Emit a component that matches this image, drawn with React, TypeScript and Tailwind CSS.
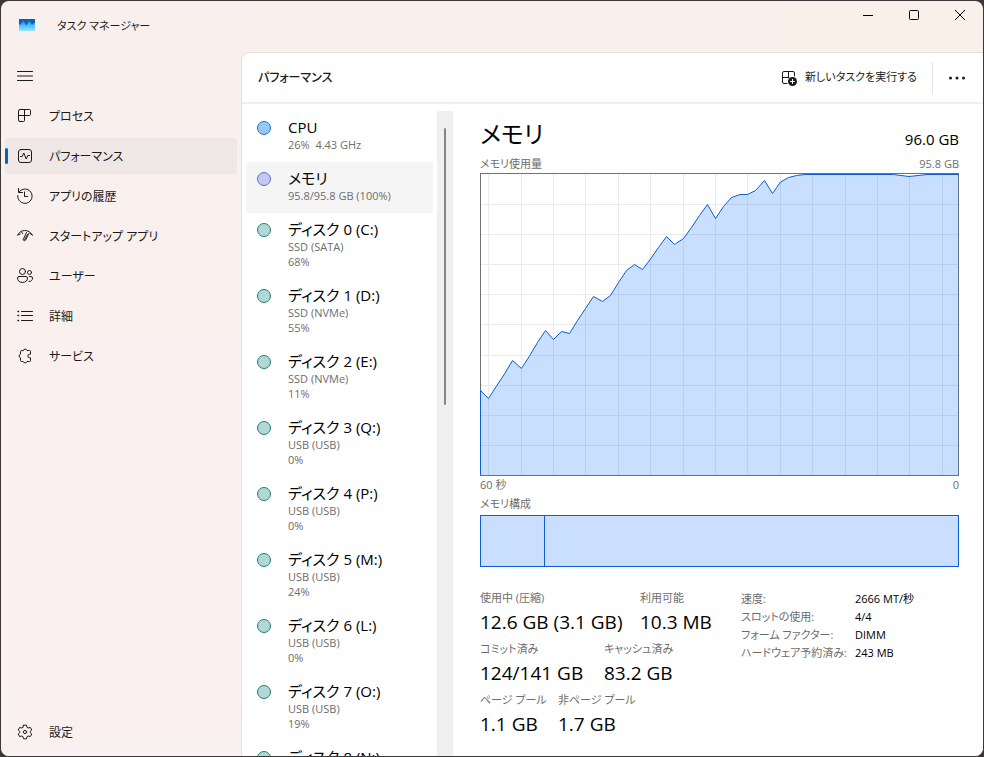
import clsx from "clsx";
import { ReactNode } from "react";

type Device = {
  name: string;
  lines: string[];
  kind: "cpu" | "memory" | "disk";
};

const devices: Device[] = [
  { name: "CPU", lines: ["26%  4.43 GHz"], kind: "cpu" },
  { name: "メモリ", lines: ["95.8/95.8 GB (100%)"], kind: "memory" },
  { name: "ディスク 0 (C:)", lines: ["SSD (SATA)", "68%"], kind: "disk" },
  { name: "ディスク 1 (D:)", lines: ["SSD (NVMe)", "55%"], kind: "disk" },
  { name: "ディスク 2 (E:)", lines: ["SSD (NVMe)", "11%"], kind: "disk" },
  { name: "ディスク 3 (Q:)", lines: ["USB (USB)", "0%"], kind: "disk" },
  { name: "ディスク 4 (P:)", lines: ["USB (USB)", "0%"], kind: "disk" },
  { name: "ディスク 5 (M:)", lines: ["USB (USB)", "24%"], kind: "disk" },
  { name: "ディスク 6 (L:)", lines: ["USB (USB)", "0%"], kind: "disk" },
  { name: "ディスク 7 (O:)", lines: ["USB (USB)", "19%"], kind: "disk" },
  { name: "ディスク 8 (N:)", lines: [], kind: "disk" },
];

const dotColors = {
  cpu: "border-[#1378d1] bg-[#98c8f0]",
  memory: "border-[#5b6ee1] bg-[#c3c9f3]",
  disk: "border-[#1f7f78] bg-[#b3d6d6]",
};

const specs = [
  ["速度:", "2666 MT/秒"],
  ["スロットの使用:", "4/4"],
  ["フォーム ファクター:", "DIMM"],
  ["ハードウェア予約済み:", "243 MB"],
];

const gridX = [
  8.5, 41.5, 73.5, 105.5, 138.5, 170.5, 203.5, 235.5, 267.5, 300.5, 332.5,
  365.5, 397.5, 429.5, 462.5,
];
const gridY = [31.5, 61.5, 91.5, 121.5, 151.5, 182.5, 212.5, 242.5, 272.5];

const usage =
  "0.5,217.5 8.5,225.5 16.5,213 24.5,201 32.5,187.5 41.5,195.5 49.5,183 57.5,169.5 65.5,157.5 73.5,166.5 81.5,158.5 89.5,160.5 97.5,147.5 105.5,135.5 113.5,123.5 122.5,128.5 130.5,122.5 138.5,109.5 146.5,97.5 154.5,91.5 162.5,96.5 170.5,86 178.5,74.5 186.5,63.5 194.5,71.5 203.5,65.5 211.5,54.5 219.5,42.5 227.5,31.5 235.5,45.5 243.5,33.5 251.5,24.5 260,21.5 267.5,21.5 275.5,17.5 284.5,7.5 292.5,20.5 300.5,9 308.5,4.5 316.5,2.5 325,1.5 413.5,1.5 429,3.5 447,1.5 478.5,1.5";

function Icon({ children }: { children: ReactNode }) {
  return (
    <svg
      className="size-4 shrink-0"
      viewBox="0 0 16 16"
      fill="none"
      stroke="currentColor"
      strokeLinecap="round"
      strokeLinejoin="round"
      aria-hidden="true"
    >
      {children}
    </svg>
  );
}

const MenuIcon = () => (
  <Icon>
    <path d="M.5 3.5h15M.5 8h15M.5 12.5h15" />
  </Icon>
);

const ProcessIcon = () => (
  <Icon>
    <path d="M3 1.5h9.500a1 1 0 0 1 1 1v4a1 1 0 0 1-1 1H1.500V3A1.500 1.500 0 0 1 3 1.500ZM1.500 7.500v4.500A1.500 1.500 0 0 0 3 13.500h3.500a1 1 0 0 0 1-1v-11" />
  </Icon>
);

const PerformanceIcon = () => (
  <Icon>
    <rect x="1.500" y="1.500" width="13" height="13" rx="2.500" />
    <path d="M3.500 8.500h1.700L6.800 5l2.400 6 1.600-3.500h1.700" />
  </Icon>
);

const HistoryIcon = () => (
  <Icon>
    <path d="M1.500.5v4h4" />
    <path d="M1.800 4.300A7.200 7.200 0 1 1 .7 7.500" />
    <path d="M7.500 4v4.500h3" />
  </Icon>
);

const StartupIcon = () => (
  <Icon>
    <path d="M.7 7C2.200 4.200 4.700 2.600 7.500 2.500c3.300-.1 6.200 1.600 7.800 4.500" />
    <path d="M.7 7 3.200 6M15.300 7 13 5.500M4.500 3.800l1 1.700M11.800 5.500l-3.300 6.700a1.200 1.200 0 0 1-2.200-.8L9.500 4.500" />
    <path d="M10.500 6.500 7.700 11.500" />
  </Icon>
);

const UsersIcon = () => (
  <Icon>
    <circle cx="5.500" cy="3.500" r="3" />
    <circle cx="12.500" cy="4.500" r="2" />
    <path d="M2 8.500h7a1.500 1.500 0 0 1 1.500 1.500c0 2.700-2 4.500-5 4.500S.5 12.700.5 10A1.500 1.500 0 0 1 2 8.500ZM12.500 8.500H14a1.500 1.500 0 0 1 1.500 1.500c0 2.200-1.200 3.500-3.500 3.500" />
  </Icon>
);

const DetailsIcon = () => (
  <Icon>
    <path d="M4.500 3.500h11M4.500 7.500h11M4.500 12.500h11" />
    <path d="M1 3.500h.5M1 7.500h.5M1 12.500h.5" strokeWidth="1.500" />
  </Icon>
);

const ServicesIcon = () => (
  <Icon>
    <path d="M6.200 2.500a2 2 0 0 1 3.800 0h2.500a1 1 0 0 1 1 1V6.200h-.8a1.800 1.800 0 0 0 0 3.600h.8v2.700a1 1 0 0 1-1 1H10a2 2 0 0 1-3.800 0H4.500a1 1 0 0 1-1-1V9.900a2 2 0 0 1 0-3.800V3.500a1 1 0 0 1 1-1Z" />
  </Icon>
);

const SettingsIcon = () => (
  <Icon>
    <circle cx="8" cy="8" r="1.600" />
    <path d="M6.500 1.200 9.500 1.200 10 3.300 11.200 4 13.300 3.400 14.800 6 13.300 7.300V8.700L14.800 10 13.300 12.600 11.200 12 10 12.700 9.500 14.800H6.500L6 12.700 4.800 12 2.700 12.600 1.200 10 2.700 8.700V7.300L1.200 6 2.700 3.400 4.800 4 6 3.300Z" />
  </Icon>
);

const NewTaskIcon = () => (
  <Icon>
    <path d="M6 13.500H3A1.500 1.500 0 0 1 1.500 12V3A1.500 1.500 0 0 1 3 1.500h9A1.500 1.500 0 0 1 13.500 3v3M7.500 1.500v6M1.500 7.500H8" />
    <circle cx="11.500" cy="11.500" r="4.500" fill="currentColor" stroke="none" />
    <path d="M11.500 9.500v4M9.500 11.500h4" stroke="#fff" />
  </Icon>
);

function AppLogo() {
  return (
    <svg className="mb-1 h-3 w-4" viewBox="0 0 16 12" aria-hidden="true">
      <defs>
        <linearGradient id="wave" x1="0" y1="0" x2="0" y2="1">
          <stop offset="0" stopColor="#1f93e0" />
          <stop offset=".5" stopColor="#5cc0f5" />
          <stop offset="1" stopColor="#9be2ff" />
        </linearGradient>
      </defs>
      <path d="M0 0h16v12H0z" fill="#0763b5" />
      <path
        d="M0 5.500h1.500L3 3.500 4.500 2 6 4.500 7.500 6.500 9 3.500 10.500 2 12 4 13 6l1.500-2H16v8H0Z"
        fill="url(#wave)"
      />
    </svg>
  );
}

const navItems = [
  { label: "プロセス", icon: <ProcessIcon /> },
  { label: "パフォーマンス", icon: <PerformanceIcon />, active: true },
  { label: "アプリの履歴", icon: <HistoryIcon /> },
  { label: "スタートアップ アプリ", icon: <StartupIcon /> },
  { label: "ユーザー", icon: <UsersIcon /> },
  { label: "詳細", icon: <DetailsIcon /> },
  { label: "サービス", icon: <ServicesIcon /> },
];

type NavButtonProps = {
  label: string;
  icon: ReactNode;
  active?: boolean;
};

function NavButton({ label, icon, active }: NavButtonProps) {
  return (
    <button
      type="button"
      aria-current={active ? "page" : undefined}
      className={clsx(
        "relative flex h-9 w-full items-center gap-4 rounded px-3 text-xs",
        active && "bg-[#efe7e5]",
      )}
    >
      {active && (
        <span className="absolute top-2.5 left-0 h-4 w-[3px] rounded-full bg-[#0067c0]" />
      )}
      {icon}
      <span className="pt-px">{label}</span>
    </button>
  );
}

function TitleBar() {
  return (
    <header className="flex h-[51px] shrink-0 items-start justify-between">
      <div className="flex h-[51px] items-center gap-[22px] pl-[18px] text-[11px]">
        <AppLogo />
        <h1>タスク マネージャー</h1>
      </div>
      <div className="flex">
        <button type="button" aria-label="最小化" className="flex h-7 w-[46px] items-center justify-center">
          <svg className="size-[10px]" viewBox="0 0 10 10" stroke="#000">
            <path d="M0 5.500h10" />
          </svg>
        </button>
        <button type="button" aria-label="最大化" className="flex h-7 w-[46px] items-center justify-center">
          <svg className="size-[10px]" viewBox="0 0 10 10" fill="none" stroke="#000">
            <rect x=".5" y=".5" width="9" height="9" rx="1" />
          </svg>
        </button>
        <button type="button" aria-label="閉じる" className="flex h-7 w-[46px] items-center justify-center">
          <svg className="size-[10px]" viewBox="0 0 10 10" stroke="#000">
            <path d="M0 0l10 10M10 0 0 10" />
          </svg>
        </button>
      </div>
    </header>
  );
}

function DeviceList() {
  return (
    <div className="flex w-[211px] shrink-0 gap-1 overflow-hidden pl-1">
      <ul className="min-w-0 flex-1">
        {devices.map((device) => (
          <li key={device.name}>
            <button
              type="button"
              className={clsx(
                "flex w-full items-start gap-[17px] pl-[11px] text-left",
                device.kind === "disk" ? "h-[66px]" : "h-[51px]",
                device.kind === "memory" && "bg-[#f5f5f5]",
              )}
            >
              <span
                className={clsx(
                  "mt-2.5 size-[14px] shrink-0 rounded-full border",
                  dotColors[device.kind],
                )}
              />
              <span className="flex flex-col pt-1.5">
                <span className="text-[15px] leading-5 text-black">
                  {device.name}
                </span>
                {device.lines.map((line) => (
                  <span
                    key={line}
                    className="text-[11px] leading-[15px] whitespace-pre text-[#6d6d6d]"
                  >
                    {line}
                  </span>
                ))}
              </span>
            </button>
          </li>
        ))}
      </ul>
      <div className="flex w-4 justify-center bg-[#f0f0f0] pt-[17px]">
        <div className="h-[277px] w-[2px] rounded-full bg-[#868686]" />
      </div>
    </div>
  );
}

function MemoryGraph() {
  return (
    <svg
      className="block h-[303px] w-full"
      viewBox="0 0 479 303"
      preserveAspectRatio="none"
      role="img"
      aria-label="メモリ使用量"
    >
      <g stroke="#ebebeb">
        {gridX.map((x) => (
          <line key={x} x1={x} x2={x} y1="1" y2="302" />
        ))}
        {gridY.map((y) => (
          <line key={y} x1="1" x2="478" y1={y} y2={y} />
        ))}
      </g>
      <rect x=".5" y=".5" width="478" height="302" fill="none" stroke="#6e7277" />
      <polygon points={`0.5,302 ${usage} 478.5,302`} fill="#06f" fillOpacity=".21" />
      <polyline points={`0.5,302 ${usage}`} fill="none" stroke="#0b5ed7" />
    </svg>
  );
}

function Stat({ label, value, className }: { label: string; value: string; className?: string }) {
  return (
    <div className={clsx("shrink-0", className)}>
      <dt className="text-[11px] leading-5 text-[#6d6d6d]">{label}</dt>
      <dd className="text-[19px] leading-7 text-black">{value}</dd>
    </div>
  );
}

function MemoryPanel() {
  return (
    <section className="min-w-0 flex-1 overflow-hidden pr-6 pl-[27px]">
      <div className="flex h-11 items-start justify-between text-black">
        <h3 className="text-2xl leading-[46px]">メモリ</h3>
        <span className="pt-3.5 text-[15px] leading-7">96.0 GB</span>
      </div>
      <div className="flex h-[18px] items-center justify-between text-[11px] text-[#6d6d6d]">
        <span>メモリ使用量</span>
        <span>95.8 GB</span>
      </div>
      <MemoryGraph />
      <div className="flex h-[18px] items-center justify-between text-[11px] text-[#6d6d6d]">
        <span>60 秒</span>
        <span>0</span>
      </div>
      <div className="flex h-[21px] items-center text-[11px] text-[#6d6d6d]">
        メモリ構成
      </div>
      <div className="flex h-[52px] border border-[#0b5ed7] bg-[#cadfff]">
        <div className="w-[64px] border-r border-[#0b5ed7]" />
      </div>

      <div className="flex pt-[21px]">
        <div className="flex w-[261px] shrink-0 flex-col gap-[3px]">
          <dl className="flex">
            <Stat label="使用中 (圧縮)" value="12.6 GB (3.1 GB)" className="w-40" />
            <Stat label="利用可能" value="10.3 MB" />
          </dl>
          <dl className="flex">
            <Stat label="コミット済み" value="124/141 GB" className="w-[124px]" />
            <Stat label="キャッシュ済み" value="83.2 GB" />
          </dl>
          <dl className="flex">
            <Stat label="ページ プール" value="1.1 GB" className="w-[78px]" />
            <Stat label="非ページ プール" value="1.7 GB" />
          </dl>
        </div>
        <table className="mt-0.5 self-start text-[11px] leading-[18px]">
          <tbody>
            {specs.map(([label, value]) => (
              <tr key={label}>
                <th className="w-[114px] p-0 text-left font-normal text-[#6d6d6d]">
                  {label}
                </th>
                <td className="p-0 text-black">{value}</td>
              </tr>
            ))}
          </tbody>
        </table>
      </div>
    </section>
  );
}

export default function App() {
  return (
    <div className="h-screen bg-[#3a3839] p-px font-['Open_Sans','Noto_Sans_CJK_JP',sans-serif] whitespace-nowrap text-[#1b1a1a] [font-feature-settings:'palt']">
      <div className="flex h-full flex-col overflow-hidden rounded-lg bg-linear-to-r from-[#f9f0ee] to-[#f9f0ea]">
        <TitleBar />
        <div className="flex min-h-0 flex-1">
          <aside className="flex w-60 shrink-0 flex-col gap-1 bg-linear-to-b from-[#f9f0ee] to-[#f9f0f0] px-1 pt-1.5 pb-1.5">
            <button
              type="button"
              aria-label="ナビゲーションを開く"
              className="flex h-9 w-10 items-center justify-center"
            >
              <MenuIcon />
            </button>
            <nav className="flex flex-1 flex-col gap-1">
              {navItems.map((item) => (
                <NavButton key={item.label} {...item} />
              ))}
            </nav>
            <NavButton label="設定" icon={<SettingsIcon />} />
          </aside>

          <main className="flex min-w-0 flex-1 flex-col overflow-hidden rounded-tl-lg border-t border-l border-[#e9dfdd] bg-white">
            <div className="flex h-[51px] shrink-0 items-center border-b-2 border-[#efefef] pl-4">
              <h2 className="flex-1 text-xs font-medium">パフォーマンス</h2>
              <button type="button" className="flex items-center gap-2 pr-[15px] text-[11px]">
                <NewTaskIcon />
                新しいタスクを実行する
              </button>
              <div className="h-8 w-px bg-[#e8e8e8]" />
              <button
                type="button"
                aria-label="その他のオプション"
                className="mr-0.5 flex h-8 w-12 items-center justify-center"
              >
                <svg className="h-1 w-4" viewBox="0 0 16 4" fill="#1b1a1a">
                  <circle cx="1.500" cy="2" r="1.500" />
                  <circle cx="8" cy="2" r="1.500" />
                  <circle cx="14.500" cy="2" r="1.500" />
                </svg>
              </button>
            </div>
            <div className="flex min-h-0 flex-1 pt-[7px]">
              <DeviceList />
              <MemoryPanel />
            </div>
          </main>
        </div>
      </div>
    </div>
  );
}
